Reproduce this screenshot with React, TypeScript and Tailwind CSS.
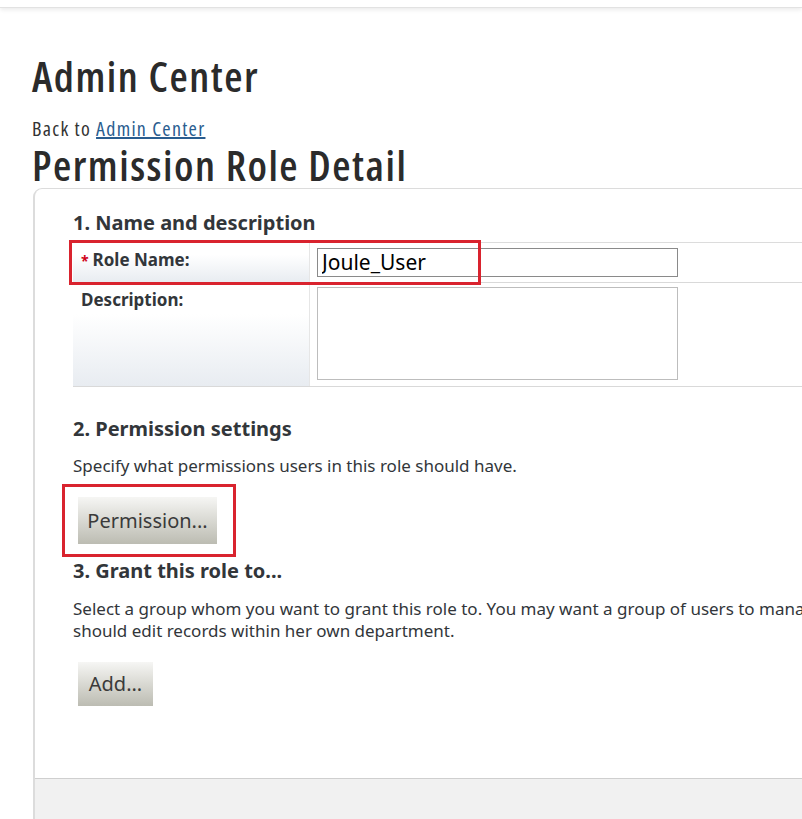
import React from 'react'

const heading = { fontFamily: '"Open Sans", Roboto, sans-serif' }

const FormRow: React.FC<{ label: string; required?: boolean; height: string; children: React.ReactNode }> = ({
  label,
  required,
  height,
  children
}) => (
  <div className={`flex border-b border-[#d9d9d9] ${height}`}>
    <div className="w-[237px] shrink-0 border-r border-[#e6e6e6] bg-gradient-to-b from-white from-30% to-[#e8ecf1] px-2 pt-[4px] text-[17px] font-bold text-[#32363a]">
      {required && <span className="mr-1 text-[14px] text-[#d0021b]">*</span>}
      {label}
    </div>
    <div className="flex-1 bg-white pl-[7px]">{children}</div>
  </div>
)

const GrayButton: React.FC<{ label: string; className: string }> = ({ label, className }) => (
  <button
    className={`bg-gradient-to-b from-[#f6f6f4] to-[#bcbcb2] text-[20px] text-[#3a3a3a] ${className}`}
  >
    {label}
  </button>
)

export default function App() {
  return (
    <div
      className="relative h-[819px] w-[802px] overflow-hidden bg-white text-[#32363a]"
      style={{ fontFamily: '"Noto Sans", "Open Sans", sans-serif' }}
    >
      {/* shell header shadow */}
      <div className="h-[8px] border-b border-[#e2e2e2] bg-white shadow-[0_2px_4px_rgba(0,0,0,0.08)]" />

      <div className="pl-[32px]">
        <h1
          className="mt-[46px] font-stretch-condensed text-[42px] font-semibold leading-[44px] tracking-[1.5px] text-[#2b2b2b]"
          style={heading}
        >
          Admin Center
        </h1>
        <div
          className="mt-[20px] font-stretch-condensed text-[20px] leading-[22px] tracking-[1.3px] text-[#333]"
          style={heading}
        >
          Back to{' '}
          <a href="#" className="text-[#2a5d8f] underline">
            Admin Center
          </a>
        </div>
        <h2
          className="mt-[4px] font-stretch-condensed text-[42px] font-semibold leading-[42px] tracking-[1.5px] text-[#2b2b2b]"
          style={heading}
        >
          Permission Role Detail
        </h2>
      </div>

      {/* main panel */}
      <div className="ml-[33px] mt-[2px] flex h-[631px] w-[900px] flex-col rounded-tl-[9px] border-l-2 border-t border-[#dcdcdc]">
        <div className="flex-1 pl-[38px]">
          <h3 className="pt-[21px] text-[20px] font-bold leading-[26px]">1. Name and description</h3>

          <div className="mt-[6px] border-t border-[#dcdcdc]">
            <FormRow label="Role Name:" required height="h-[40px]">
              <input
                readOnly
                value="Joule_User"
                className="mt-[5px] h-[29px] w-[361px] border border-[#8a8a8a] px-[4px] text-[21px] text-black outline-none"
              />
            </FormRow>
            <FormRow label="Description:" height="h-[104px]">
              <textarea
                readOnly
                className="mt-[4px] h-[93px] w-[361px] resize-none border border-[#bdbdbd] outline-none"
              />
            </FormRow>
          </div>

          <h3 className="mt-[29px] text-[20px] font-bold leading-[26px]">2. Permission settings</h3>
          <p className="mt-[13px] text-[17px] leading-[22px]">
            Specify what permissions users in this role should have.
          </p>
          <GrayButton label="Permission..." className="ml-[5px] mt-[20px] h-[47px] w-[139px]" />

          <h3 className="mt-[14px] text-[20px] font-bold leading-[26px]">3. Grant this role to...</h3>
          <p className="mt-[14px] w-[860px] text-[17px] leading-[22px]">
            <span className="whitespace-nowrap">
              Select a group whom you want to grant this role to. You may want a group of users to manage all records,
              or you may want a manager who
            </span>
            <br />
            should edit records within her own department.
          </p>
          <GrayButton label="Add..." className="ml-[5px] mt-[20px] h-[44px] w-[75px]" />
        </div>
        <div className="h-[41px] shrink-0 border-t border-[#cfcfcf] bg-[#f1f1f1]" />
      </div>

      {/* red annotation boxes */}
      <div className="pointer-events-none absolute left-[69px] top-[240px] h-[45px] w-[412px] border-[3px] border-[#d9232e]" />
      <div className="pointer-events-none absolute left-[62px] top-[484px] h-[73px] w-[174px] border-[3px] border-[#d9232e]" />
    </div>
  )
}
